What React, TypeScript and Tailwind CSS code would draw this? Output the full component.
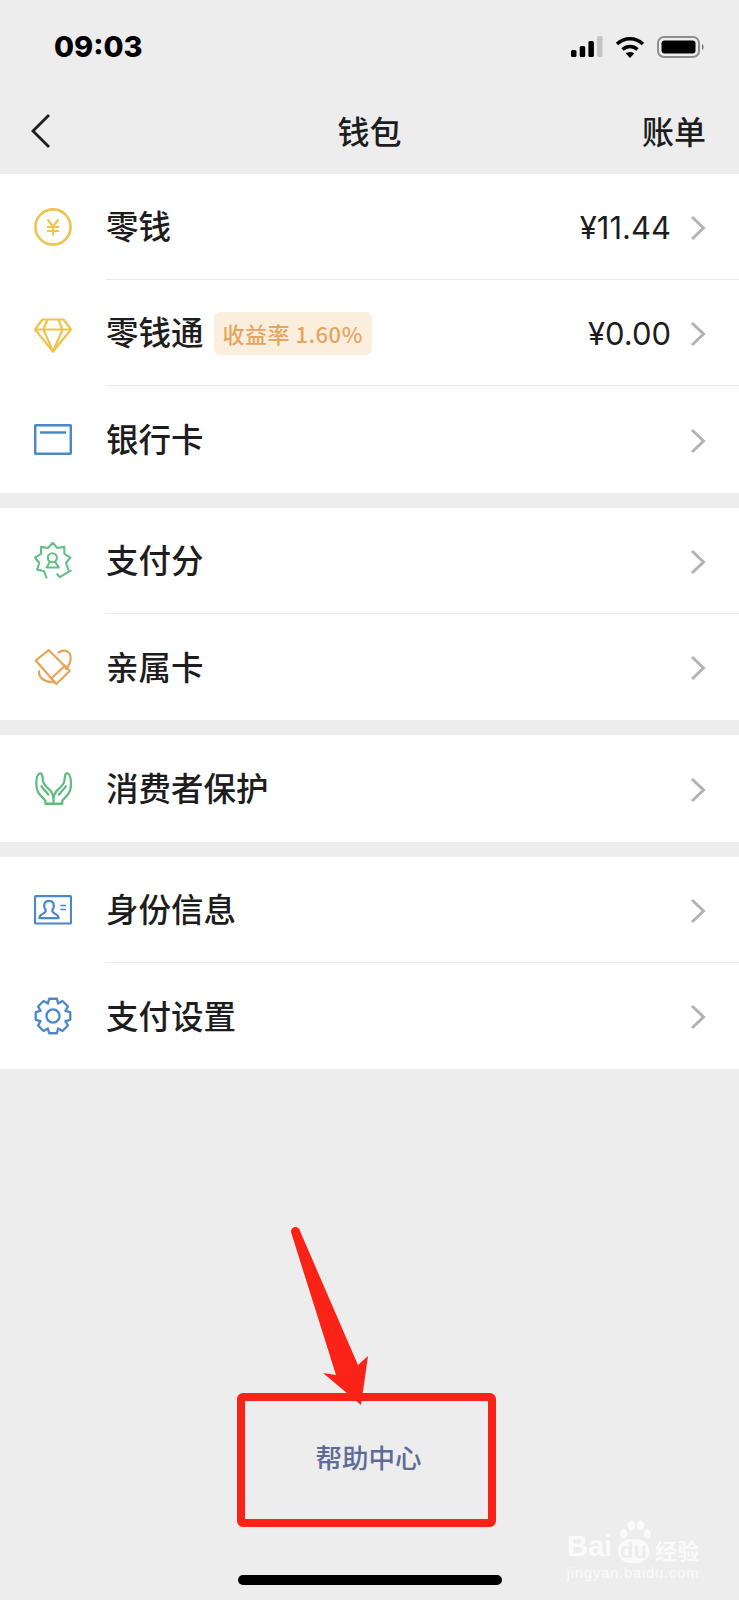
import React from "react";

const CJK = "font-['Noto_Sans_CJK_SC',sans-serif]";

function gearPath(cx: number, cy: number, n: number, ro: number, ri: number) {
  const pts: string[] = [];
  const step = (Math.PI * 2) / n;
  for (let i = 0; i < n; i++) {
    const a = -Math.PI / 2 + i * step;
    const seq: [number, number][] = [
      [-0.5, ri],
      [-0.28, ro],
      [0.28, ro],
      [0.5, ri],
    ];
    seq.forEach(([o, r]) => {
      const t = a + o * step;
      pts.push(`${(cx + r * Math.cos(t)).toFixed(1)} ${(cy + r * Math.sin(t)).toFixed(1)}`);
    });
  }
  return "M" + pts.join("L") + "Z";
}

function starPath(cx: number, cy: number, n: number, ro: number, ri: number, skipFrom: number, skipTo: number) {
  let d = "";
  const step = (Math.PI * 2) / n;
  let pen = false;
  for (let i = 0; i <= n; i++) {
    const a = -Math.PI / 2 + i * step;
    const outer = [cx + ro * Math.cos(a), cy + ro * Math.sin(a)];
    const b = a + step / 2;
    const inner = [cx + ri * Math.cos(b), cy + ri * Math.sin(b)];
    const inSkip = i >= skipFrom && i <= skipTo;
    if (!inSkip) {
      d += `${pen ? "L" : "M"}${outer[0].toFixed(1)} ${outer[1].toFixed(1)}`;
      pen = true;
      if (i < n && !(i + 1 >= skipFrom && i + 1 <= skipTo)) d += `L${inner[0].toFixed(1)} ${inner[1].toFixed(1)}`;
    } else {
      pen = false;
    }
  }
  return d;
}

const CoinIcon = () => (
  <svg width="38" height="38" viewBox="0 0 38 38" fill="none" stroke="#eec44f">
    <circle cx="19" cy="19" r="17.6" strokeWidth="2.6" />
    <path d="M13.5 11.5 19 18.5 24.5 11.5M13 19H25M13 23H25M19 18.5V27.5" strokeWidth="2.2" />
  </svg>
);

const DiamondIcon = () => (
  <svg width="38" height="35" viewBox="0 0 38 35" fill="none" stroke="#eec44f" strokeWidth="2.2" strokeLinejoin="round">
    <path d="M8.5 1.5H29.5L37 11.5 19 33.5 1 11.5Z" />
    <path d="M1 11.5H37M13.5 1.5 9.5 11.5 19 33.5 28.5 11.5 24.5 1.5" />
  </svg>
);

const CardIcon = () => (
  <svg width="38" height="31" viewBox="0 0 38 31" fill="none" stroke="#4a88ca" strokeWidth="2.5">
    <rect x="1.2" y="1.2" width="35.6" height="28.6" rx="1" />
    <path d="M6 8.5H32" />
  </svg>
);

const ScoreIcon = () => (
  <svg width="38" height="38" viewBox="100 95 118 116" fill="none" stroke="#62bf85" strokeWidth="6.5" strokeLinejoin="round" strokeLinecap="round">
    <path d={starPath(158, 152, 9, 56, 42, 4, 4)} />
    <circle cx="157" cy="143" r="14" />
    <path d="M149 156 139 173H177L166 156" />
    <path d="M172 194 180 203 214 183" />
  </svg>
);

const FamilyIcon = () => (
  <svg width="38" height="38" viewBox="100 418 112 112" fill="none" stroke="#e6a557" strokeWidth="6.5" strokeLinejoin="round" strokeLinecap="round">
    <path d="M105 455 143 424 205 486 166 524Z" />
    <path d="M151 507 192 470" />
    <path d="M172 431C190 420 208 427 208 447 208 462 202 472 194 480" />
    <path d="M115 487C113 505 130 518 158 519" />
  </svg>
);

const HandsIcon = () => (
  <svg width="37" height="35" viewBox="102 783 114 104" fill="none" stroke="#5fbd7f" strokeWidth="7" strokeLinejoin="round" strokeLinecap="round">
    <path d="M159 882H134V872C120 858 106 848 106 822 106 806 108 790 118 788 126 788 125 800 126 810 128 824 138 830 150 842 156 850 159 856 159 864Z" />
    <path d="M159 882H186V872C200 858 213 848 213 822 213 806 211 790 201 788 193 788 194 800 193 810 191 824 181 830 169 842 163 850 159 856 159 864" />
    <path d="M122 828C126 836 135 842 143 854M197 828C193 836 184 842 176 854" />
  </svg>
);

const IdIcon = () => (
  <svg width="38" height="30" viewBox="102 136 114 89" fill="none" stroke="#4a88ca" strokeWidth="6.5" strokeLinejoin="round">
    <rect x="105" y="139" width="108" height="82" rx="3" />
    <path d="M118 205C118 190 140 194 137 180 128 168 133 153 147 153 161 153 166 168 157 180 154 194 176 190 176 205Z" />
    <path d="M181 167H198M181 179H198" strokeWidth="5" />
  </svg>
);

const GearIcon = () => (
  <svg width="38" height="38" viewBox="100 440 116 116" fill="none" stroke="#4a88ca" strokeWidth="7" strokeLinejoin="round">
    <path d={gearPath(158, 498, 8, 54, 41)} />
    <circle cx="158" cy="498" r="20" />
  </svg>
);

const Chevron = () => (
  <svg width="16" height="26" viewBox="0 0 16 26" fill="none" stroke="#b3b3b3" strokeWidth="3" className="shrink-0 translate-y-[1px]">
    <path d="M2 2 13.5 13 2 24" />
  </svg>
);

function Row({ icon, label, right, last, extra }: { icon: React.ReactNode; label: string; right?: string; last?: boolean; extra?: React.ReactNode }) {
  return (
    <div className={last ? "flex h-[107px] items-center" : "flex h-[106px] items-center"}>
      <div className="ml-[34px] flex w-[38px] shrink-0 items-center justify-center">{icon}</div>
      <div className={last ? "ml-[34px] flex h-full flex-1 items-center pr-[33px]" : "ml-[34px] flex h-full flex-1 items-center border-b border-[#e9e9e9] pr-[33px]"}>
        <span className="-mt-[2px] text-[32.5px] leading-none font-medium text-[#1d1d1d]">{label}</span>
        {extra}
        <div className="flex-1" />
        {right && <span className="mr-[19px] translate-y-[1px] font-['Inter',sans-serif] text-[31px] leading-none text-[#1d1d1d]">{right}</span>}
        <Chevron />
      </div>
    </div>
  );
}

export default function App() {
  return (
    <div className={`relative flex h-[1600px] w-[739px] flex-col overflow-hidden bg-[#ededed] ${CJK}`}>
      <div className="flex h-[94px] items-center justify-between pr-[34px] pl-[54px]">
        <span className="font-['Inter',sans-serif] text-[29px] font-extrabold text-black">09:03</span>
        <div className="flex items-center gap-[12px]">
          <svg width="32" height="22" viewBox="0 0 32 22">
            <rect x="0" y="14" width="5.5" height="7" rx="1.5" fill="#000" />
            <rect x="8.7" y="10" width="5.5" height="11" rx="1.5" fill="#000" />
            <rect x="17.4" y="5" width="5.5" height="16" rx="1.5" fill="#000" />
            <rect x="26" y="0" width="5.5" height="21" rx="1.5" fill="#c4c4c4" />
          </svg>
          <svg width="30" height="23" viewBox="0 0 30 23" fill="none" stroke="#000" strokeWidth="3.6">
            <path d="M2 8C9.5 1 20.5 1 28 8" />
            <path d="M7.5 13.5C12 9.5 18 9.5 22.5 13.5" />
            <path d="M15 22 10.8 17.6C13 15.6 17 15.6 19.2 17.6Z" fill="#000" stroke="none" />
          </svg>
          <svg width="48" height="22" viewBox="0 0 48 22" fill="none">
            <rect x="1" y="1" width="41" height="20" rx="6" stroke="#8e8e8e" strokeWidth="2" />
            <rect x="4.5" y="4.5" width="34" height="13" rx="3" fill="#000" />
            <path d="M45 8C47 9 47 13 45 14Z" fill="#6e6e6e" />
          </svg>
        </div>
      </div>

      <div className="flex h-[80px] -translate-y-[4px] items-center justify-between pr-[33px] pl-[31px]">
        <svg width="19" height="34" viewBox="0 0 19 34" fill="none" stroke="#1d1d1d" strokeWidth="2.8" className="translate-y-[1px]">
          <path d="M18 1 2 17 18 33" />
        </svg>
        <span className="absolute left-0 w-full text-center text-[32px] font-medium text-[#1d1d1d]">钱包</span>
        <span className="text-[32px] font-medium text-[#1d1d1d]">账单</span>
      </div>

      <section className="bg-white">
        <Row icon={<CoinIcon />} label="零钱" right="¥11.44" />
        <Row
          icon={<span className="block translate-y-[2px]"><DiamondIcon /></span>}
          label="零钱通"
          right="¥0.00"
          extra={
            <span className="ml-[10px] flex h-[43px] translate-y-[1px] items-center rounded-[6px] bg-[#fbeedd] px-[9px] text-[22px] font-medium tracking-[0.5px] text-[#e6a55f]">收益率 1.60%</span>
          }
        />
        <Row icon={<CardIcon />} label="银行卡" last />
      </section>

      <section className="mt-[15px] bg-white">
        <Row icon={<ScoreIcon />} label="支付分" />
        <div className="[&>div]:h-[106px]">
          <Row icon={<FamilyIcon />} label="亲属卡" last />
        </div>
      </section>

      <section className="mt-[15px] bg-white">
        <Row icon={<HandsIcon />} label="消费者保护" last />
      </section>

      <section className="mt-[15px] bg-white">
        <Row icon={<IdIcon />} label="身份信息" />
        <div className="[&>div]:h-[106px]">
          <Row icon={<GearIcon />} label="支付设置" last />
        </div>
      </section>

      <div className="flex flex-1 flex-col items-center pt-[371px]">
        <span className="-translate-x-[1px] text-[26.5px] leading-[34px] font-medium text-[#5d6c96]">帮助中心</span>
        <div className="mt-auto mb-[15px] h-[10px] w-[264px] rounded-full bg-black" />
      </div>

      {/* annotation: red frame and arrow */}
      <div className="absolute top-[1393px] left-[237px] h-[134px] w-[259px] rounded-[6px] border-[8px] border-[#fb2317]" />
      <svg className="absolute top-0 left-0" width="739" height="1600" viewBox="0 0 739 1600" fill="#fb2317">
        <path d="M291 1232C291 1226 299 1225 300 1231L358 1365 368 1356 361 1405 323 1373 336 1375Z" />
      </svg>

      {/* watermark */}
      <div className="absolute top-[1519px] left-[567px] flex w-[132px] flex-col items-center text-white opacity-75">
        <div className="flex h-[44px] w-full items-end justify-between font-['Liberation_Sans',sans-serif] text-[29px] leading-[34px] font-bold">
          <span>Bai</span>
          <span className="relative rounded-full bg-white px-[2px] text-[22px] leading-[24px] text-[#ededed]">
            du
            <svg className="absolute -top-[20px] left-[1px]" width="32" height="24" viewBox="0 0 34 24" fill="#fff">
              <ellipse cx="5" cy="15" rx="4" ry="5" />
              <ellipse cx="13" cy="6" rx="4" ry="5.5" />
              <ellipse cx="23" cy="6" rx="4" ry="5.5" />
              <ellipse cx="30" cy="15" rx="4" ry="5" />
            </svg>
          </span>
          <span className={`text-[22px] leading-[28px] font-bold ${CJK}`}>经验</span>
        </div>
        <span className="font-['Liberation_Sans',sans-serif] text-[15px] leading-[20px] tracking-[0.7px]">jingyan.baidu.com</span>
      </div>
    </div>
  );
}
